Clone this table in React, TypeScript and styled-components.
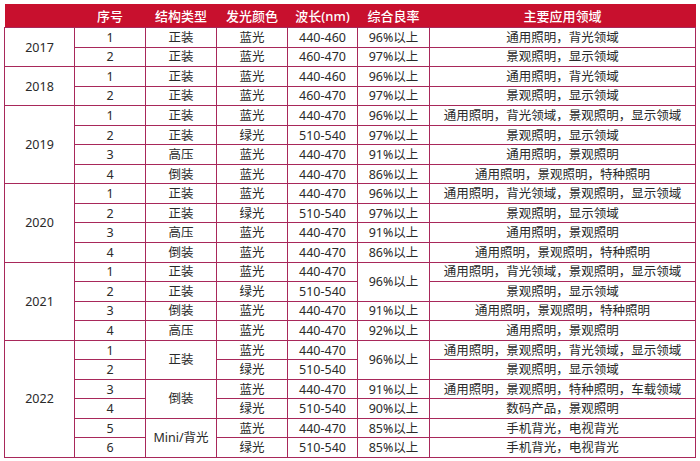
import { createGlobalStyle } from "styled-components";
import styled from "styled-components";

const GlobalStyle = createGlobalStyle`
  body {
    margin: 0;
    background: #ffffff;
    font-family: "Noto Sans", "Noto Sans CJK SC", sans-serif;
  }
`;

const Page = styled.div`
  padding: 4px 0 0 4px;
`;

const Table = styled.table`
  width: 691px;
  table-layout: fixed;
  border-collapse: collapse;
  color: #2a2a2a;
  font-size: 12.5px;
`;

const HeadCell = styled.th`
  background: #c8102e;
  color: #ffffff;
  font-size: 13px;
  font-weight: 500;
  height: 23px;
  padding: 0;
  text-align: center;
  border: none;
`;

const Row = styled.tr`
  height: 19.55px;
`;

const Cell = styled.td`
  border: 1px solid #a8285a;
  padding: 0;
  text-align: center;
  line-height: 17px;
  white-space: nowrap;
`;

type Line = {
  year?: [string, number];
  no: string;
  type?: [string, number];
  color: string;
  wave: string;
  rate?: [string, number];
  use: string;
};

const A = "通用照明，背光领域";
const B = "景观照明，显示领域";
const C = "通用照明，背光领域，景观照明，显示领域";
const D = "通用照明，景观照明";
const E = "通用照明，景观照明，特种照明";

const lines: Line[] = [
  { year: ["2017", 2], no: "1", type: ["正装", 1], color: "蓝光", wave: "440-460", rate: ["96%以上", 1], use: A },
  { no: "2", type: ["正装", 1], color: "蓝光", wave: "460-470", rate: ["97%以上", 1], use: B },
  { year: ["2018", 2], no: "1", type: ["正装", 1], color: "蓝光", wave: "440-460", rate: ["96%以上", 1], use: A },
  { no: "2", type: ["正装", 1], color: "蓝光", wave: "460-470", rate: ["97%以上", 1], use: B },
  { year: ["2019", 4], no: "1", type: ["正装", 1], color: "蓝光", wave: "440-470", rate: ["96%以上", 1], use: C },
  { no: "2", type: ["正装", 1], color: "绿光", wave: "510-540", rate: ["97%以上", 1], use: B },
  { no: "3", type: ["高压", 1], color: "蓝光", wave: "440-470", rate: ["91%以上", 1], use: D },
  { no: "4", type: ["倒装", 1], color: "蓝光", wave: "440-470", rate: ["86%以上", 1], use: E },
  { year: ["2020", 4], no: "1", type: ["正装", 1], color: "蓝光", wave: "440-470", rate: ["96%以上", 1], use: C },
  { no: "2", type: ["正装", 1], color: "绿光", wave: "510-540", rate: ["97%以上", 1], use: B },
  { no: "3", type: ["高压", 1], color: "蓝光", wave: "440-470", rate: ["91%以上", 1], use: D },
  { no: "4", type: ["倒装", 1], color: "蓝光", wave: "440-470", rate: ["86%以上", 1], use: E },
  { year: ["2021", 4], no: "1", type: ["正装", 1], color: "蓝光", wave: "440-470", rate: ["96%以上", 2], use: C },
  { no: "2", type: ["正装", 1], color: "绿光", wave: "510-540", use: B },
  { no: "3", type: ["倒装", 1], color: "蓝光", wave: "440-470", rate: ["91%以上", 1], use: E },
  { no: "4", type: ["高压", 1], color: "蓝光", wave: "440-470", rate: ["92%以上", 1], use: D },
  { year: ["2022", 6], no: "1", type: ["正装", 2], color: "蓝光", wave: "440-470", rate: ["96%以上", 2], use: "通用照明，景观照明，背光领域，显示领域" },
  { no: "2", color: "绿光", wave: "510-540", use: B },
  { no: "3", type: ["倒装", 2], color: "蓝光", wave: "440-470", rate: ["91%以上", 1], use: "通用照明，景观照明，特种照明，车载领域" },
  { no: "4", color: "绿光", wave: "510-540", rate: ["90%以上", 1], use: "数码产品，景观照明" },
  { no: "5", type: ["Mini/背光", 2], color: "蓝光", wave: "440-470", rate: ["85%以上", 1], use: "手机背光，电视背光" },
  { no: "6", color: "绿光", wave: "510-540", rate: ["85%以上", 1], use: "手机背光，电视背光" },
];

const widths = [70, 71, 71, 71, 70, 72, 266];
const heads = ["", "序号", "结构类型", "发光颜色", "波长(nm)", "综合良率", "主要应用领域"];

export default function App() {
  return (
    <Page>
      <GlobalStyle />
      <Table>
        <colgroup>
          {widths.map((w, i) => (
            <col key={i} style={{ width: w }} />
          ))}
        </colgroup>
        <thead>
          <tr>
            {heads.map((h, i) => (
              <HeadCell key={i}>{h}</HeadCell>
            ))}
          </tr>
        </thead>
        <tbody>
          {lines.map((l, i) => (
            <Row key={i}>
              {l.year && <Cell rowSpan={l.year[1]}>{l.year[0]}</Cell>}
              <Cell>{l.no}</Cell>
              {l.type && <Cell rowSpan={l.type[1]}>{l.type[0]}</Cell>}
              <Cell>{l.color}</Cell>
              <Cell>{l.wave}</Cell>
              {l.rate && <Cell rowSpan={l.rate[1]}>{l.rate[0]}</Cell>}
              <Cell>{l.use}</Cell>
            </Row>
          ))}
        </tbody>
      </Table>
    </Page>
  );
}
